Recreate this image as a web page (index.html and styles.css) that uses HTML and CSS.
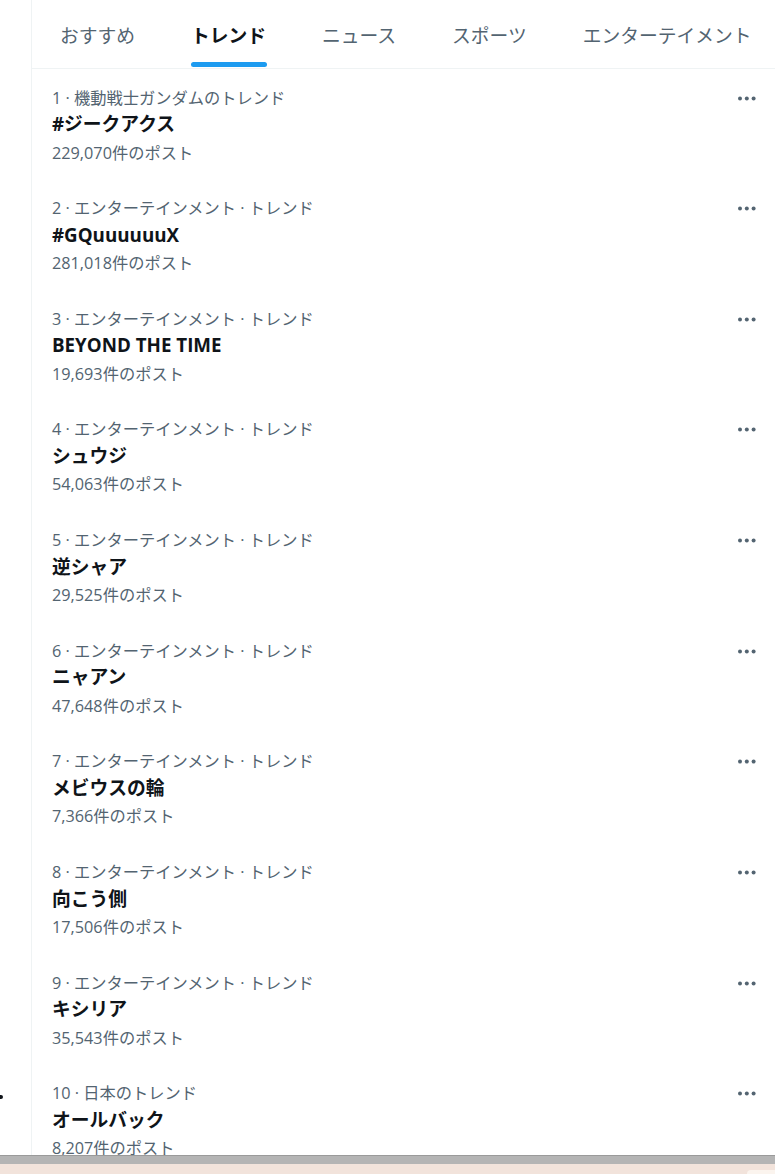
FILE: index.html
```html
<!DOCTYPE html>
<html lang="ja">
<head>
<meta charset="utf-8">
<title>トレンド</title>
<link rel="stylesheet" href="styles.css">
</head>
<body>
<div class="screen">
  <div class="app">
    <aside class="side"><span class="side-dot"></span></aside>
    <main class="main">
      <nav class="tabs">
        <a class="tab"><span class="tab-label">おすすめ</span></a>
        <a class="tab active"><span class="tab-label">トレンド<span class="tab-bar"></span></span></a>
        <a class="tab"><span class="tab-label">ニュース</span></a>
        <a class="tab"><span class="tab-label">スポーツ</span></a>
        <a class="tab"><span class="tab-label">エンターテイメント</span></a>
      </nav>
      <section class="list">
        <div class="trend"><div class="trend-body"><div class="meta">1 · 機動戦士ガンダムのトレンド</div><div class="title">#ジークアクス</div><div class="count">229,070件のポスト</div></div><button class="more"><svg viewBox="0 0 19 5" width="19" height="5"><circle cx="2" cy="2.5" r="2"/><circle cx="8.8" cy="2.5" r="2"/><circle cx="15.6" cy="2.5" r="2"/></svg></button></div>
        <div class="trend"><div class="trend-body"><div class="meta">2 · エンターテインメント · トレンド</div><div class="title">#GQuuuuuuX</div><div class="count">281,018件のポスト</div></div><button class="more"><svg viewBox="0 0 19 5" width="19" height="5"><circle cx="2" cy="2.5" r="2"/><circle cx="8.8" cy="2.5" r="2"/><circle cx="15.6" cy="2.5" r="2"/></svg></button></div>
        <div class="trend"><div class="trend-body"><div class="meta">3 · エンターテインメント · トレンド</div><div class="title">BEYOND THE TIME</div><div class="count">19,693件のポスト</div></div><button class="more"><svg viewBox="0 0 19 5" width="19" height="5"><circle cx="2" cy="2.5" r="2"/><circle cx="8.8" cy="2.5" r="2"/><circle cx="15.6" cy="2.5" r="2"/></svg></button></div>
        <div class="trend"><div class="trend-body"><div class="meta">4 · エンターテインメント · トレンド</div><div class="title">シュウジ</div><div class="count">54,063件のポスト</div></div><button class="more"><svg viewBox="0 0 19 5" width="19" height="5"><circle cx="2" cy="2.5" r="2"/><circle cx="8.8" cy="2.5" r="2"/><circle cx="15.6" cy="2.5" r="2"/></svg></button></div>
        <div class="trend"><div class="trend-body"><div class="meta">5 · エンターテインメント · トレンド</div><div class="title">逆シャア</div><div class="count">29,525件のポスト</div></div><button class="more"><svg viewBox="0 0 19 5" width="19" height="5"><circle cx="2" cy="2.5" r="2"/><circle cx="8.8" cy="2.5" r="2"/><circle cx="15.6" cy="2.5" r="2"/></svg></button></div>
        <div class="trend"><div class="trend-body"><div class="meta">6 · エンターテインメント · トレンド</div><div class="title">ニャアン</div><div class="count">47,648件のポスト</div></div><button class="more"><svg viewBox="0 0 19 5" width="19" height="5"><circle cx="2" cy="2.5" r="2"/><circle cx="8.8" cy="2.5" r="2"/><circle cx="15.6" cy="2.5" r="2"/></svg></button></div>
        <div class="trend"><div class="trend-body"><div class="meta">7 · エンターテインメント · トレンド</div><div class="title">メビウスの輪</div><div class="count">7,366件のポスト</div></div><button class="more"><svg viewBox="0 0 19 5" width="19" height="5"><circle cx="2" cy="2.5" r="2"/><circle cx="8.8" cy="2.5" r="2"/><circle cx="15.6" cy="2.5" r="2"/></svg></button></div>
        <div class="trend"><div class="trend-body"><div class="meta">8 · エンターテインメント · トレンド</div><div class="title">向こう側</div><div class="count">17,506件のポスト</div></div><button class="more"><svg viewBox="0 0 19 5" width="19" height="5"><circle cx="2" cy="2.5" r="2"/><circle cx="8.8" cy="2.5" r="2"/><circle cx="15.6" cy="2.5" r="2"/></svg></button></div>
        <div class="trend"><div class="trend-body"><div class="meta">9 · エンターテインメント · トレンド</div><div class="title">キシリア</div><div class="count">35,543件のポスト</div></div><button class="more"><svg viewBox="0 0 19 5" width="19" height="5"><circle cx="2" cy="2.5" r="2"/><circle cx="8.8" cy="2.5" r="2"/><circle cx="15.6" cy="2.5" r="2"/></svg></button></div>
        <div class="trend"><div class="trend-body"><div class="meta">10 · 日本のトレンド</div><div class="title">オールバック</div><div class="count">8,207件のポスト</div></div><button class="more"><svg viewBox="0 0 19 5" width="19" height="5"><circle cx="2" cy="2.5" r="2"/><circle cx="8.8" cy="2.5" r="2"/><circle cx="15.6" cy="2.5" r="2"/></svg></button></div>
      </section>
    </main>
  </div>
  <div class="taskbar"></div>
  <div class="desk"><span class="desk-pill"></span></div>
</div>
</body>
</html>
```

FILE: styles.css
```css
html, body {
  margin: 0;
  padding: 0;
  background: #ffffff;
}
body {
  font-family: "Open Sans", "Noto Sans CJK JP", sans-serif;
  color: #0f1419;
  overflow: hidden;
}
.screen {
  width: 775px;
  height: 1174px;
  display: flex;
  flex-direction: column;
  overflow: hidden;
}
.app {
  height: 1155px;
  display: flex;
  overflow: hidden;
  flex: none;
}
.side {
  width: 31px;
  flex: none;
  border-right: 1px solid #eff3f4;
  position: relative;
}
.side-dot {
  position: absolute;
  left: 0;
  top: 1095px;
  width: 3px;
  height: 4px;
  background: #0f1419;
  border-radius: 0 2px 2px 0;
}
.main {
  flex: 1;
  min-width: 0;
}
.tabs {
  display: flex;
  height: 68px;
  border-bottom: 1px solid #eff3f4;
  white-space: nowrap;
}
.tab {
  display: flex;
  align-items: center;
  padding: 0 28px;
  font-family: "Noto Sans CJK JP", sans-serif;
  font-size: 18.75px;
  color: #536471;
  flex: none;
}
.tab-label {
  position: relative;
  display: flex;
  align-items: center;
  height: 100%;
  padding-top: 1px;
  box-sizing: border-box;
}
.tab.active {
  color: #0f1419;
  font-weight: 700;
}
.tab-bar {
  position: absolute;
  left: 0;
  right: -1px;
  bottom: 1px;
  height: 5px;
  border-radius: 9999px;
  background: #1d9bf0;
}
.trend {
  display: flex;
  justify-content: space-between;
  padding: 18.5px 18px 17.17px 20px;
}
.trend-body {
  display: flex;
  flex-direction: column;
}
.meta, .count {
  font-size: 16.25px;
  line-height: 20px;
  color: #536471;
}
.title {
  margin-top: 3.5px;
  font-size: 18.75px;
  line-height: 25px;
  font-weight: 700;
  color: #0f1419;
}
.count {
  margin-top: 6.5px;
}
.more {
  border: 0;
  background: none;
  padding: 0;
  margin-top: 8px;
  height: 5px;
  width: 19px;
  fill: #536471;
  display: flex;
}
.taskbar {
  height: 9px;
  flex: none;
  background: #b4b4b4;
  border-top: 1px solid #9a9a9a;
  box-sizing: border-box;
}
.desk {
  flex: 1;
  background: #f2e3db;
  position: relative;
}
.desk-pill {
  position: absolute;
  left: 747px;
  top: 6px;
  width: 40px;
  height: 20px;
  background: #fbf4ee;
  border-radius: 4px;
}
```
